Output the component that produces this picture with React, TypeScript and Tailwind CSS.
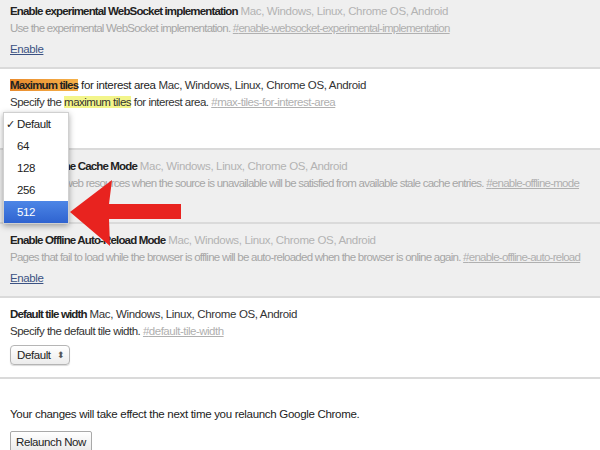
import React from 'react';

const font = { fontFamily: '"Liberation Sans", Arial, sans-serif' };

function Platforms({ dim }: { dim?: boolean }) {
  return (
    <span className={dim ? 'font-normal tracking-[-0.35px] text-[#b3b3b3]' : 'font-normal tracking-[-0.35px] text-[#333]'}>
      {' '}Mac, Windows, Linux, Chrome OS, Android
    </span>
  );
}

function Section({
  dim,
  title,
  desc,
  anchor,
  children,
}: {
  dim?: boolean;
  title: React.ReactNode;
  desc: React.ReactNode;
  anchor: string;
  children?: React.ReactNode;
}) {
  return (
    <div
      className={`px-[10px] pt-2 border-b-2 border-[#dadada] ${
        dim ? 'bg-[#efefef]' : 'bg-white'
      }`}
    >
      <div className="whitespace-nowrap text-[#222] tracking-[-0.85px]">
        {title}
        <Platforms dim={dim} />
      </div>
      <div
        className={`whitespace-nowrap ${
          dim ? 'tracking-[-0.75px] text-[#a6a6a6]' : 'tracking-[-0.5px] text-[#333]'
        }`}
      >
        {desc}{' '}
        <span className="underline text-[#b0b0b0]">#{anchor}</span>
      </div>
      {children}
    </div>
  );
}

function EnableLink() {
  return (
    <div className="mt-1 pb-[9px]">
      <span className="underline text-[#3b5283]">Enable</span>
    </div>
  );
}

function SelectBox({ hidden }: { hidden?: boolean }) {
  return (
    <div className={`mt-[5px] pb-3 ${hidden ? 'invisible' : ''}`}>
      <div className="inline-flex items-center h-5 pl-[6px] pr-[5px] gap-[6px] rounded-[4px] border border-[#b5b5b5] bg-gradient-to-b from-white to-[#ececec] shadow-[0_1px_1px_rgba(0,0,0,0.15)] text-[#222]">
        <span>Default</span>
        <span className="text-[9px] leading-none text-[#555]">⬍</span>
      </div>
    </div>
  );
}

export default function App() {
  return (
    <div
      className="relative w-[600px] h-[450px] overflow-hidden bg-white text-[11.5px] leading-[17px] tracking-[-0.4px]"
      style={font}
    >
      <div className="-mt-[5px]">
        <Section
          dim
          title={<b>Enable experimental WebSocket implementation</b>}
          desc="Use the experimental WebSocket implementation."
          anchor="enable-websocket-experimental-implementation"
        >
          <EnableLink />
        </Section>

        <Section
          title={
            <>
              <b className="bg-gradient-to-r from-[#e98a2c] to-[#f5b24a]">Maximum tiles</b>
              <span className="tracking-[-0.35px]"> for interest area</span>
            </>
          }
          desc={
            <>
              Specify the <span className="bg-[#f3f58a]">maximum tiles</span> for interest area.
            </>
          }
          anchor="max-tiles-for-interest-area"
        >
          <SelectBox hidden />
        </Section>

        <Section
          dim
          title={<b>Enable Offline Cache Mode</b>}
          desc="Reads from web resources when the source is unavailable will be satisfied from available stale cache entries."
          anchor="enable-offline-mode"
        >
          <EnableLink />
        </Section>

        <Section
          dim
          title={<b>Enable Offline Auto-Reload Mode</b>}
          desc="Pages that fail to load while the browser is offline will be auto-reloaded when the browser is online again."
          anchor="enable-offline-auto-reload"
        >
          <EnableLink />
        </Section>

        <Section
          title={<b>Default tile width</b>}
          desc="Specify the default tile width."
          anchor="default-tile-width"
        >
          <SelectBox />
        </Section>

        <div className="px-[10px] pt-[27px] text-[#222]">
          <div className="tracking-[-0.3px]">Your changes will take effect the next time you relaunch Google Chrome.</div>
          <button className="mt-[8px] h-[22px] px-[5px] border border-[#a9a9a9] rounded-[2px] bg-gradient-to-b from-white to-[#e9e9e9] text-[#222]">
            Relaunch Now
          </button>
        </div>
      </div>

      {/* open select menu */}
      <div className="absolute left-[3px] top-[112px] w-[66px] bg-white shadow-[0_2px_6px_rgba(0,0,0,0.35)] border border-[#d0d0d0] text-[#222]">
        {['Default', '64', '128', '256', '512'].map((v, i) => (
          <div
            key={v}
            className={`relative h-[22px] flex items-center pl-[13px] ${
              i === 4 ? 'bg-gradient-to-b from-[#4d86e6] to-[#2f63d0] text-white' : ''
            }`}
          >
            {i === 0 && <span className="absolute left-[2px] text-[11px]">✓</span>}
            {v}
          </div>
        ))}
      </div>

      {/* red annotation arrow */}
      <svg className="absolute left-0 top-0 pointer-events-none" width="600" height="450">
        <polygon
          points="70,212 112,180 109,204 181,204 181,219 109,219 110,246"
          fill="#e8231f"
        />
      </svg>
    </div>
  );
}
